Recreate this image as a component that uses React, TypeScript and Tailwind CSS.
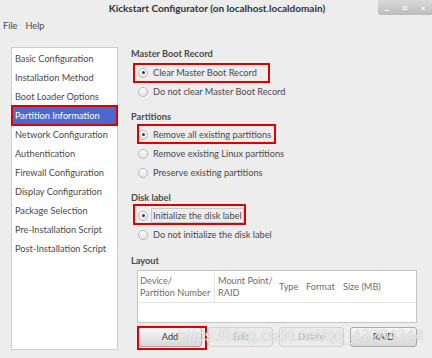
import React from "react";

const font = { fontFamily: 'Lato, "Noto Sans", "DejaVu Sans", sans-serif' };

function Radio({
  label,
  checked,
  box,
  focus,
}: {
  label: string;
  checked?: boolean;
  box?: { left: number; width: number; top: number; height: number };
  focus?: boolean;
}) {
  return (
    <div className="relative flex items-center h-[19px] pl-[7px]">
      <span className="w-[10px] h-[10px] rounded-full border border-[#b8b8b8] bg-gradient-to-b from-white to-[#e4e4e4] flex items-center justify-center mr-[3px] shrink-0">
        {checked && <span className="w-[3px] h-[3px] rounded-full bg-[#3a3a3a]" />}
      </span>
      <span
        className={
          "text-[9.2px] text-[#4a4a4a] whitespace-nowrap px-[1px] leading-[13px] " +
          (focus ? "border border-[#c9c9c9]" : "border border-transparent")
        }
      >
        {label}
      </span>
      {box && (
        <div
          className="absolute border-2 border-[#e00000] pointer-events-none"
          style={{ left: box.left, width: box.width, top: box.top, height: box.height }}
        />
      )}
    </div>
  );
}

function Header({ children, className }: { children: React.ReactNode; className: string }) {
  return (
    <div className={"text-[9.2px] font-bold text-[#4a4a4a] h-[14px] flex items-center " + className}>
      {children}
    </div>
  );
}

export default function App() {
  const items = [
    "Basic Configuration",
    "Installation Method",
    "Boot Loader Options",
    "Partition Information",
    "Network Configuration",
    "Authentication",
    "Firewall Configuration",
    "Display Configuration",
    "Package Selection",
    "Pre-Installation Script",
    "Post-Installation Script",
  ];
  return (
    <div className="w-[432px] h-[358px] bg-[#ededed] overflow-hidden relative" style={font}>
      <div className="h-[17px] relative flex items-center justify-center">
        <span className="text-[10px] font-bold text-[#2e3436] pl-[2px]">
          Kickstart Configurator (on localhost.localdomain)
        </span>
        <div className="absolute right-0 top-0 h-[15px] w-[54px] flex bg-gradient-to-b from-[#dadada] to-[#bcbcbc] rounded-bl-[3px]">
          <div className="flex-1 flex items-end justify-center pb-[4px]">
            <div className="w-[4px] h-[1px] bg-white" />
          </div>
          <div className="flex-1 flex items-center justify-center">
            <div className="w-[4px] h-[4px] border border-white" />
          </div>
          <div className="flex-1 flex items-center justify-center text-white text-[8px] font-bold">×</div>
        </div>
      </div>
      <div className="h-[18px] flex items-center gap-[8px] pl-[3px] text-[9.2px] text-[#4a4a4a]">
        <span>File</span>
        <span>Help</span>
      </div>
      <div className="flex pt-[12px]">
        <div className="ml-[11px] w-[107px] h-[303px] bg-white border border-[#cfcfcf] pt-[1px] shrink-0">
          {items.map((it) => (
            <div
              key={it}
              className={
                "h-[19px] flex items-center pl-[3px] text-[9.2px] whitespace-nowrap " +
                (it === "Partition Information"
                  ? "bg-[#4a68cf] text-white outline-2 outline-[#e00000] -outline-offset-1"
                  : "text-[#4a4a4a]")
              }
            >
              {it}
            </div>
          ))}
        </div>
        <div className="ml-[13px] flex-1 pr-[15px]">
          <Header className="">Master Boot Record</Header>
          <div className="mt-[2px]">
            <Radio label="Clear Master Boot Record" checked box={{ left: 2, width: 137, top: 0, height: 20 }} />
            <Radio label="Do not clear Master Boot Record" />
          </div>
          <Header className="mt-[9px]">Partitions</Header>
          <div className="mt-[1px]">
            <Radio label="Remove all existing partitions" checked box={{ left: 6, width: 139, top: -1, height: 20 }} />
            <Radio label="Remove existing Linux partitions" />
            <Radio label="Preserve existing partitions" />
          </div>
          <Header className="mt-[9px]">Disk label</Header>
          <div className="mt-[1px]">
            <Radio label="Initialize the disk label" checked focus box={{ left: 2, width: 113, top: -2, height: 21 }} />
            <Radio label="Do not initialize the disk label" />
          </div>
          <Header className="mt-[10px]">Layout</Header>
          <div className="ml-[6px] mt-[2px] h-[53px] bg-white border border-[#c4c4c4]">
            <div className="h-[32px] flex text-[9.2px] text-[#6e6e6e] border-b border-[#e4e4e4]">
              <div className="w-[77px] border-r border-[#e4e4e4] pl-[2px] leading-[12px] flex flex-col justify-center whitespace-nowrap">
                <span>Device/</span>
                <span>Partition Number</span>
              </div>
              <div className="w-[63px] pl-[3px] leading-[12px] flex flex-col justify-center whitespace-nowrap">
                <span>Mount Point/</span>
                <span>RAID</span>
              </div>
              <div className="w-[27px] pl-[1px] flex items-center">Type</div>
              <div className="w-[37px] pl-[1px] flex items-center">Format</div>
              <div className="flex-1 pl-[1px] flex items-center whitespace-nowrap">Size (MB)</div>
            </div>
          </div>
          <div className="ml-[7px] mt-[4px] flex text-[9.2px]">
            <div className="relative w-[64px] h-[20px] rounded-[3px] border border-[#a8a8a8] bg-gradient-to-b from-[#f8f8f8] to-[#d8d8d8] flex items-center justify-center text-[#3c3c3c]">
              Add
              <div className="absolute -left-[2px] -top-[2px] w-[70px] h-[24px] border-2 border-[#e00000]" />
            </div>
            <div className="ml-[6px] w-[65px] h-[20px] rounded-[3px] border border-[#d2d2d2] bg-[#ebebeb] flex items-center justify-center text-[#b0b0b0]">
              Edit
            </div>
            <div className="ml-[6px] w-[65px] h-[20px] rounded-[3px] border border-[#d2d2d2] bg-[#ebebeb] flex items-center justify-center text-[#b0b0b0]">
              Delete
            </div>
            <div className="ml-[6px] flex-1 h-[20px] rounded-[3px] border border-[#a8a8a8] bg-gradient-to-b from-[#f8f8f8] to-[#d8d8d8] flex items-center justify-center text-[#3c3c3c]">
              RAID
            </div>
          </div>
        </div>
      </div>
      <div
        className="absolute left-[178px] top-[327px] text-[16px] leading-[18px] text-white/75 whitespace-nowrap pointer-events-none"
        style={{ fontFamily: '"Liberation Sans", Arial, sans-serif', textShadow: "0 0 1px rgba(140,140,140,0.7)" }}
      >
        https://blog.csdn.net/qq_43284344
      </div>
    </div>
  );
}
